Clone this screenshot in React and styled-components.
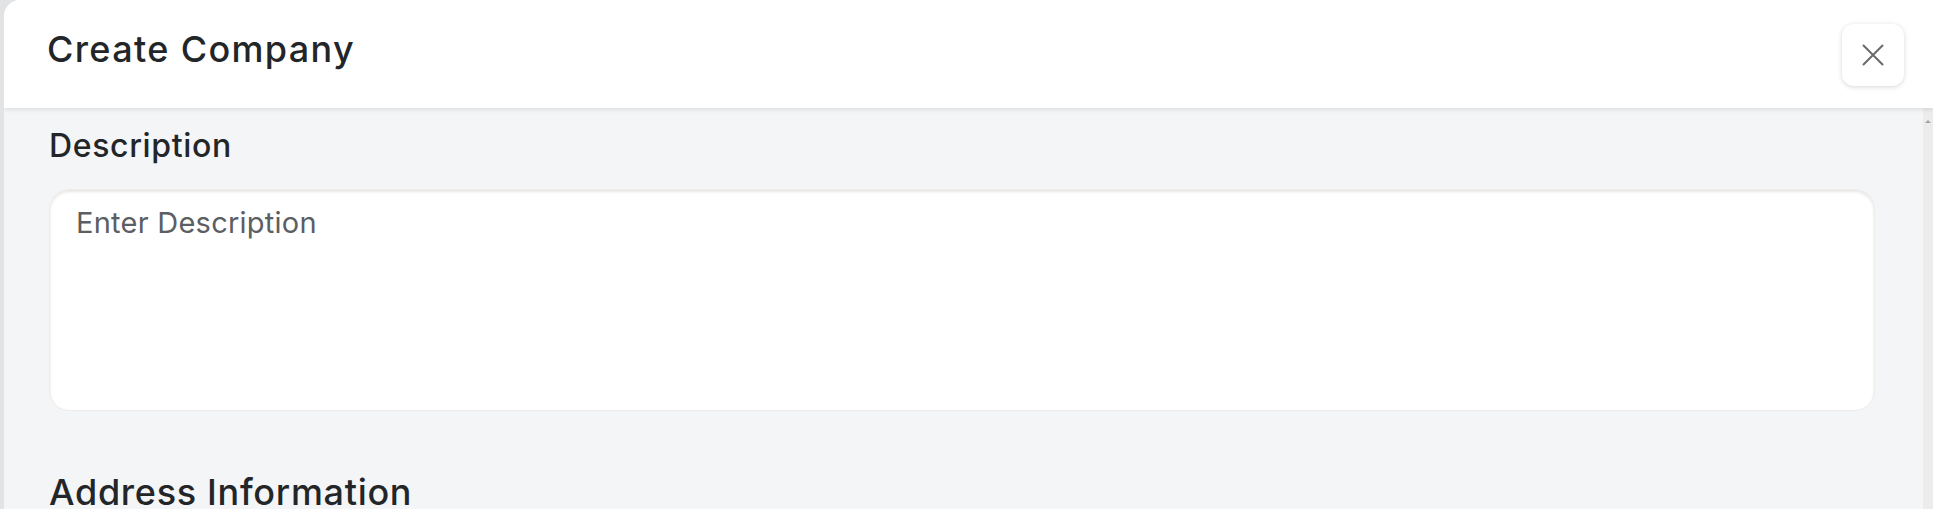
import React from 'react'
import styled, { createGlobalStyle } from 'styled-components'

const GlobalStyle = createGlobalStyle`
    html, body {
        margin: 0;
        padding: 0;
        background: #e2e3e5;
        font-family: Inter, "Open Sans", sans-serif;
    }
    * {
        box-sizing: border-box;
    }
`;

const StyledModal = styled.div`
    display: flex;
    flex-direction: column;
    height: 509px;
    margin-left: 4px;
    background: #f4f5f7;
    border-top-left-radius: 16px;
    overflow: hidden;
`;

const StyledHeader = styled.header`
    position: relative;
    z-index: 1;
    display: flex;
    justify-content: space-between;
    align-items: flex-start;
    flex-shrink: 0;
    height: 108px;
    padding: 24px 29px 0 43px;
    background: #fff;
    box-shadow: 0 2px 4px rgba(0, 0, 0, 0.09);
`;

const StyledTitle = styled.h2`
    margin: 0;
    font-size: 36px;
    line-height: 51px;
    font-weight: 500;
    letter-spacing: 1.35px;
    color: #232629;
`;

const StyledCloseButton = styled.button`
    display: flex;
    justify-content: center;
    align-items: center;
    width: 62px;
    height: 62px;
    padding: 0;
    border: none;
    border-radius: 12px;
    background: #fff;
    box-shadow: 0 1px 5px rgba(0, 0, 0, 0.16);
    cursor: pointer;
`;

const StyledBodyRow = styled.div`
    display: flex;
    flex: 1;
    min-height: 0;
`;

const StyledContent = styled.div`
    flex: 1;
    padding: 17px 48px 0 45px;
    overflow: hidden;
`;

const StyledLabel = styled.label`
    display: block;
    font-size: 32px;
    line-height: 41px;
    font-weight: 500;
    letter-spacing: 0.65px;
    color: #232629;
`;

const StyledTextArea = styled.textarea`
    display: block;
    width: 100%;
    height: 222px;
    margin-top: 23px;
    padding: 15px 26px;
    border: 1px solid #eeecea;
    border-radius: 20px;
    background: #fff;
    box-shadow: inset 0 2px 3px rgba(110, 95, 80, 0.16);
    font-family: inherit;
    font-size: 29px;
    line-height: 36px;
    color: #232629;
    resize: none;
    outline: none;

    &::placeholder {
        color: #5b5e62;
        letter-spacing: 0.25px;
    }
`;

const StyledSectionTitle = styled.h3`
    margin: 56px 0 0;
    font-size: 36px;
    line-height: 50px;
    font-weight: 500;
    letter-spacing: 0.7px;
    color: #232629;
`;

const StyledScrollTrack = styled.div`
    width: 10px;
    flex-shrink: 0;
    padding-top: 12px;
    background: #ececec;
    display: flex;
    justify-content: center;
    align-items: flex-start;
`;

const StyledScrollArrow = styled.span`
    width: 0;
    height: 0;
    border-left: 3px solid transparent;
    border-right: 3px solid transparent;
    border-bottom: 3px solid #a3a3a3;
`;

const CloseIcon = () => (
    <svg width="22" height="22" viewBox="0 0 22 22" fill="none">
        <path d="M1.5 1.5 L20.5 20.5 M20.5 1.5 L1.5 20.5" stroke="#6a6a6a" strokeWidth="2" strokeLinecap="round" />
    </svg>
)

const App = () => {
    return (
        <>
            <GlobalStyle />
            <StyledModal>
                <StyledHeader>
                    <StyledTitle>Create Company</StyledTitle>
                    <StyledCloseButton aria-label="close">
                        <CloseIcon />
                    </StyledCloseButton>
                </StyledHeader>
                <StyledBodyRow>
                    <StyledContent>
                        <StyledLabel htmlFor="description">Description</StyledLabel>
                        <StyledTextArea id="description" placeholder="Enter Description" />
                        <StyledSectionTitle>Address Information</StyledSectionTitle>
                    </StyledContent>
                    <StyledScrollTrack>
                        <StyledScrollArrow />
                    </StyledScrollTrack>
                </StyledBodyRow>
            </StyledModal>
        </>
    )
}

export default App
